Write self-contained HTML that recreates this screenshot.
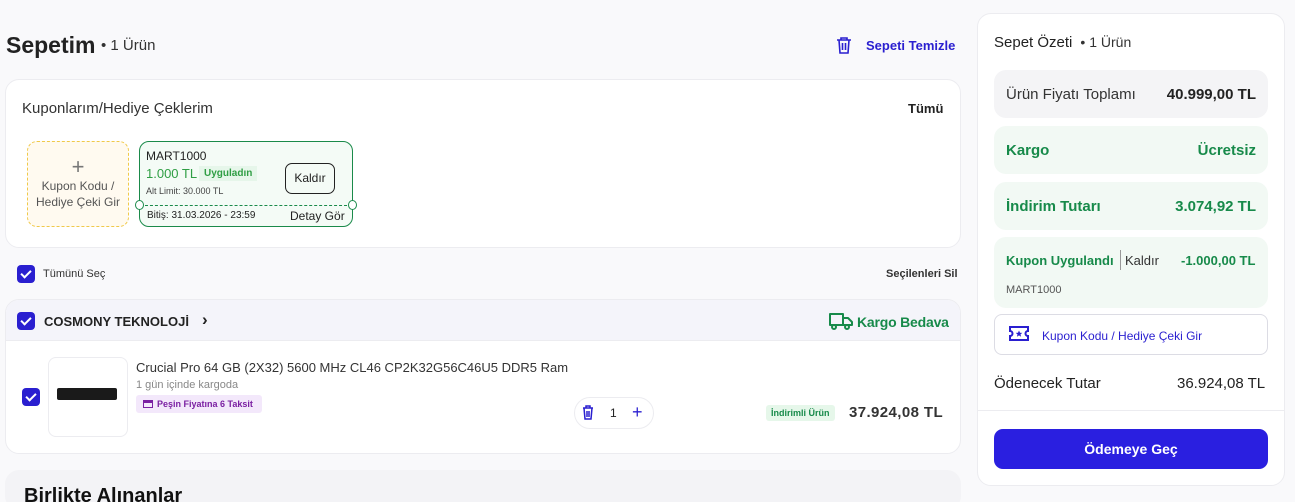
<!DOCTYPE html>
<html><head><meta charset="utf-8"><style>
*{box-sizing:border-box;margin:0;padding:0}
html,body{width:1295px;height:502px;overflow:hidden}
body{background:#f9f9fb;font-family:"Liberation Sans",sans-serif;color:#222;position:relative}
.abs{position:absolute}
.card{position:absolute;background:#fff;border:1px solid #ececf0;border-radius:14px}
.chk{position:absolute;width:18px;height:18px;border-radius:4px;background:#2a1fd0}
.chk:after{content:"";position:absolute;left:6px;top:3px;width:4px;height:8px;border:solid #fff;border-width:0 2px 2px 0;transform:rotate(45deg)}
.row{position:absolute;left:16px;width:274px;border-radius:12px;display:flex;align-items:center;justify-content:space-between;padding:0 12px;font-size:15px}
.g{color:#178a4a;font-weight:bold}
</style></head><body>
<div class="abs" style="left:6px;top:32px;font-size:23px;font-weight:bold;color:#222">Sepetim</div>
<div class="abs" style="left:101px;top:37px;font-size:15px;color:#333">• 1 Ürün</div>
<svg class="abs" style="left:836px;top:36px" width="16" height="18" viewBox="0 0 16 18"><path d="M1 4h14M5 4V2h6v2M3 4l1 13h8l1-13M6.5 7v7M9.5 7v7" stroke="#2a1fd0" stroke-width="1.6" fill="none"/></svg>
<div class="abs" style="left:866px;top:38px;font-size:13px;font-weight:bold;color:#2a1fd0">Sepeti Temizle</div>

<div class="card" style="left:5px;top:79px;width:956px;height:169px"></div>
<div class="abs" style="left:22px;top:100px;font-size:15px;color:#333">Kuponlarım/Hediye Çeklerim</div>
<div class="abs" style="left:908px;top:101px;font-size:13px;font-weight:bold">Tümü</div>
<div class="abs" style="left:27px;top:141px;width:102px;height:86px;border:1px dashed #f0c94a;border-radius:10px;background:#fffaf0;text-align:center;font-size:12px;color:#555;line-height:16px;padding-top:14px"><div style="font-size:22px;color:#777;line-height:22px">+</div>Kupon Kodu /<br>Hediye Çeki Gir</div>
<div class="abs" style="left:139px;top:141px;width:214px;height:86px;border:1px solid #1a8a4a;border-radius:10px;background:#f4fbf6"></div>
<div class="abs" style="left:140px;top:205px;width:212px;border-top:1px dashed #1a8a4a"></div>
<div class="abs" style="left:135px;top:200px;width:9px;height:10px;border-radius:50%;background:#fff;border:1px solid #1a8a4a"></div>
<div class="abs" style="left:348px;top:200px;width:9px;height:10px;border-radius:50%;background:#fff;border:1px solid #1a8a4a"></div>
<div class="abs" style="left:146px;top:149px;font-size:12px;color:#222">MART1000</div>
<div class="abs" style="left:146px;top:166px;font-size:13px;color:#2f9e44">1.000 TL</div>
<div class="abs" style="left:199px;top:166px;font-size:10px;color:#2f9e44;background:#e6f6ea;padding:2px 5px;font-weight:bold">Uyguladın</div>
<div class="abs" style="left:146px;top:186px;font-size:9px;color:#444">Alt Limit: 30.000 TL</div>
<div class="abs" style="left:285px;top:163px;width:50px;height:31px;border:1px solid #222;border-radius:7px;font-size:12px;text-align:center;line-height:29px">Kaldır</div>
<div class="abs" style="left:147px;top:210px;font-size:10px;color:#222">Bitiş: 31.03.2026 - 23:59</div>
<div class="abs" style="left:290px;top:209px;font-size:12px;color:#222">Detay Gör</div>

<div class="chk" style="left:17px;top:265px"></div>
<div class="abs" style="left:43px;top:268px;font-size:11px;color:#333">Tümünü Seç</div>
<div class="abs" style="left:886px;top:268px;font-size:11px;font-weight:bold;color:#333">Seçilenleri Sil</div>

<div class="card" style="left:5px;top:299px;width:956px;height:155px;overflow:hidden">
<div style="height:41px;background:#f4f4fa;border-bottom:1px solid #ececf0"></div></div>
<div class="chk" style="left:17px;top:312px"></div>
<div class="abs" style="left:44px;top:314px;font-size:13px;font-weight:bold;color:#222">COSMONY TEKNOLOJİ</div>
<div class="abs" style="left:202px;top:310px;font-size:17px;font-weight:bold">›</div>
<svg class="abs" style="left:829px;top:312px" width="24" height="18" viewBox="0 0 24 18"><path d="M1 2h13v11H1zM14 6h5l4 4v3h-9" stroke="#178a4a" stroke-width="2" fill="none" stroke-linejoin="round"/><circle cx="5" cy="15" r="2" fill="#fff" stroke="#178a4a" stroke-width="2"/><circle cx="18" cy="15" r="2" fill="#fff" stroke="#178a4a" stroke-width="2"/></svg>
<div class="abs g" style="left:857px;top:314px;font-size:14px;letter-spacing:-0.2px">Kargo Bedava</div>
<div class="chk" style="left:22px;top:388px"></div>
<div class="abs" style="left:48px;top:357px;width:80px;height:80px;border:1px solid #ececf0;border-radius:8px"></div>
<div class="abs" style="left:57px;top:388px;width:60px;height:12px;background:#1a1a1a;border-radius:2px"></div>
<div class="abs" style="left:136px;top:360px;font-size:13px;color:#333">Crucial Pro 64 GB (2X32) 5600 MHz CL46 CP2K32G56C46U5 DDR5 Ram</div>
<div class="abs" style="left:136px;top:379px;font-size:11px;color:#888">1 gün içinde kargoda</div>
<div class="abs" style="left:136px;top:395px;font-size:9px;font-weight:bold;color:#7a1fa2;background:#f3e8fb;padding:4px 9px 4px 21px;border-radius:3px">Peşin Fiyatına 6 Taksit</div>
<div class="abs" style="left:143px;top:400px;width:10px;height:8px;border:1.5px solid #7a1fa2;border-top-width:3px"></div>
<div class="abs" style="left:574px;top:397px;width:80px;height:32px;border:1px solid #ececf0;border-radius:16px"></div>
<svg class="abs" style="left:582px;top:405px" width="12" height="15" viewBox="0 0 12 15"><path d="M1 3h10M4 3V1h4v2M2 3l1 11h6l1-11M5 6v6M7 6v6" stroke="#2a1fd0" stroke-width="1.5" fill="none"/></svg>
<div class="abs" style="left:610px;top:406px;font-size:12px">1</div>
<div class="abs" style="left:632px;top:402px;font-size:18px;color:#2a1fd0">+</div>
<div class="abs" style="left:766px;top:405px;font-size:9px;font-weight:bold;color:#178a4a;background:#e6f7ea;padding:3px 5px;border-radius:3px">İndirimli Ürün</div>
<div class="abs" style="left:849px;top:404px;font-size:15px;font-weight:bold;color:#333;letter-spacing:0.4px">37.924,08 TL</div>

<div class="abs" style="left:5px;top:470px;width:956px;height:40px;background:#f3f3f6;border-radius:14px"></div>
<div class="abs" style="left:24px;top:485px;font-size:20px;font-weight:bold;color:#111">Birlikte Alınanlar</div>

<div class="card" style="left:977px;top:13px;width:308px;height:473px"></div>
<div class="abs" style="left:994px;top:34px;font-size:15px;color:#222">Sepet Özeti <span style="font-size:14px;color:#333">&nbsp;• 1 Ürün</span></div>
<div class="row" style="left:994px;top:70px;height:48px;background:#f4f4f6"><span style="color:#333">Ürün Fiyatı Toplamı</span><b>40.999,00 TL</b></div>
<div class="row g" style="left:994px;top:126px;height:48px;background:#f2f9f4"><span>Kargo</span><span>Ücretsiz</span></div>
<div class="row g" style="left:994px;top:182px;height:48px;background:#f2f9f4"><span>İndirim Tutarı</span><span>3.074,92 TL</span></div>
<div class="abs" style="left:994px;top:237px;width:274px;height:71px;border-radius:12px;background:#f2f9f4"></div>
<div class="abs g" style="left:1006px;top:253px;font-size:13px">Kupon Uygulandı</div>
<div class="abs" style="left:1120px;top:250px;height:20px;border-left:1px solid #999"></div>
<div class="abs" style="left:1125px;top:253px;font-size:13px;color:#333">Kaldır</div>
<div class="abs g" style="left:1181px;top:253px;font-size:13px">-1.000,00 TL</div>
<div class="abs" style="left:1006px;top:284px;font-size:11px;color:#555">MART1000</div>
<div class="abs" style="left:994px;top:314px;width:274px;height:41px;border:1px solid #dcdce4;border-radius:8px"></div>
<svg class="abs" style="left:1009px;top:326px" width="20" height="15" viewBox="0 0 20 15"><path d="M1 1h18v4a2.5 2.5 0 0 0 0 5v4H1v-4a2.5 2.5 0 0 0 0-5z" stroke="#2a1fd0" stroke-width="2" fill="none"/><path d="M10 4.5l1 2.2 2.3.2-1.8 1.5.6 2.3-2.1-1.3-2.1 1.3.6-2.3-1.8-1.5 2.3-.2z" fill="#2a1fd0"/></svg>
<div class="abs" style="left:1042px;top:329px;font-size:12px;color:#2a1fd0">Kupon Kodu / Hediye Çeki Gir</div>
<div class="abs" style="left:994px;top:375px;font-size:15px;color:#222">Ödenecek Tutar</div>
<div class="abs" style="left:1177px;top:375px;font-size:15px;color:#222">36.924,08 TL</div>
<div class="abs" style="left:978px;top:410px;width:306px;border-top:1px solid #ececf0"></div>
<div class="abs" style="left:994px;top:429px;width:274px;height:40px;background:#2a1fe0;border-radius:9px;color:#fff;font-size:14px;font-weight:bold;text-align:center;line-height:40px">Ödemeye Geç</div>
</body></html>
